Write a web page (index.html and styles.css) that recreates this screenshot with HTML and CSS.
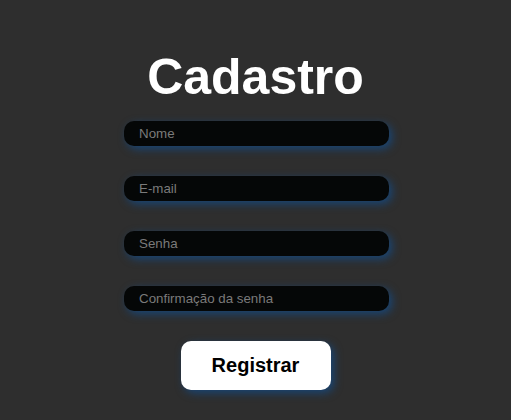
FILE: index.html
```html
<!DOCTYPE html>
<html lang="pt-BR">
<head>
<meta charset="utf-8">
<title>Cadastro</title>
<link rel="stylesheet" href="styles.css">
</head>
<body>
<main class="page">
  <form class="form">
    <h1 class="title">Cadastro</h1>
    <input class="field" type="text" placeholder="Nome">
    <input class="field" type="email" placeholder="E-mail">
    <input class="field" type="password" placeholder="Senha">
    <input class="field" type="password" placeholder="Confirmação da senha">
    <button class="submit" type="button">Registrar</button>
  </form>
</main>
</body>
</html>
```

FILE: styles.css
```css
html, body {
  margin: 0;
  padding: 0;
  background: #2e2e2e;
  height: 100%;
}
.page {
  display: flex;
  justify-content: center;
}
.form {
  display: flex;
  flex-direction: column;
  align-items: center;
  gap: 30px;
  padding-top: 49px;
}
.title {
  margin: 0 0 -14px;
  font-family: "Liberation Sans", Arial, sans-serif;
  font-weight: bold;
  font-size: 50px;
  line-height: 56px;
  color: #ffffff;
}
.field {
  box-sizing: border-box;
  width: 265px;
  height: 25px;
  margin: 0 -1px 0 1px;
  padding: 0 15px;
  border: none;
  border-radius: 10px;
  background: #050707;
  color: #ddd;
  font-family: "Liberation Sans", Arial, sans-serif;
  font-size: 13.333px;
  outline: none;
  box-shadow: 3px 3px 8px rgba(22, 72, 125, 0.9);
}
.field::placeholder {
  color: #7a7a7a;
}
.submit {
  width: 150px;
  height: 49px;
  border: none;
  border-radius: 10px;
  background: #ffffff;
  color: #000;
  font-family: "Liberation Sans", Arial, sans-serif;
  font-weight: bold;
  font-size: 20px;
  box-shadow: 3px 3px 8px rgba(22, 72, 125, 0.9);
  cursor: pointer;
}
```
